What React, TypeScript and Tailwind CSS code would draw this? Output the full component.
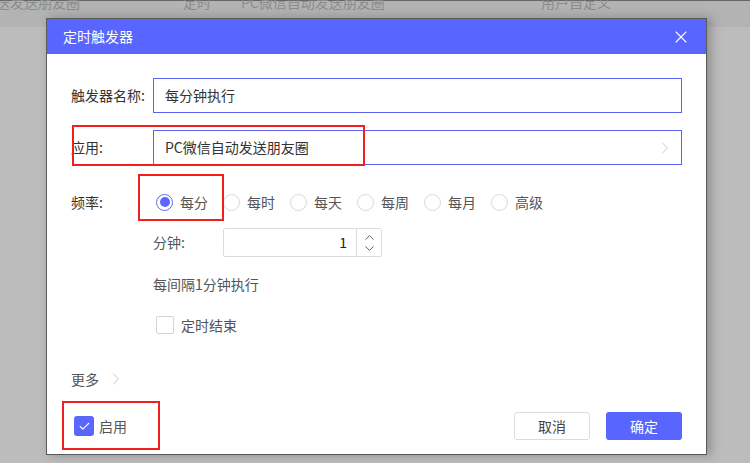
import { Check, ChevronRight, ChevronUp, ChevronDown, X } from "lucide-react";

const FREQS = ["每分", "每时", "每天", "每周", "每月", "高级"];

function Radio({ label, checked }: { label: string; checked?: boolean }) {
  return (
    <label className="flex items-center gap-[7px]">
      <span
        className={
          checked
            ? "flex h-[17px] w-[17px] items-center justify-center rounded-full border border-[#5a67fd] bg-white"
            : "h-[17px] w-[17px] rounded-full border border-[#d9d9d9] bg-white"
        }
      >
        {checked && <span className="h-[10px] w-[10px] rounded-full bg-[#5a67fd]" />}
      </span>
      <span className="text-[14px] text-[#555]">{label}</span>
    </label>
  );
}

export default function App() {
  return (
    <div className="relative h-[463px] w-[750px] overflow-hidden bg-[#bcbcbc] font-['Noto_Sans_CJK_SC',sans-serif]">
      {/* table behind the mask */}
      <div className="h-[27px] border-t border-[#666] bg-[#b3b3b3] text-[14px] leading-none text-[#8c8c8c]">
        <div className="relative -top-[6px] flex">
          <span className="-ml-[4px] w-[187px]">送发送朋友圈</span>
          <span className="w-[58px]">定时</span>
          <span className="w-[300px]">PC微信自动发送朋友圈</span>
          <span>用户自定义</span>
        </div>
      </div>

      {/* dialog */}
      <div className="absolute left-[46px] top-[18px] flex h-[437px] w-[661px] flex-col border border-[#5a5a5a] bg-white shadow-[4px_0_10px_rgba(0,0,0,0.25)]">
        <div className="flex h-[35px] items-center justify-between bg-[#5865fe] pl-[16px] pr-[15px] text-[14px] text-white">
          <span>定时触发器</span>
          <X size={20} strokeWidth={1.3} />
        </div>

        <div className="flex flex-1 flex-col px-[24px] text-[14px] text-[#333]">
          <div className="mt-[24px] flex h-[35px] items-center">
            <span className="w-[82px]">触发器名称:</span>
            <div className="flex h-full flex-1 items-center border border-[#5b63f3] pl-[11px]">每分钟执行</div>
          </div>

          <div className="mt-[17px] flex h-[35px] items-center">
            <span className="w-[82px]">应用:</span>
            <div className="flex h-full flex-1 items-center justify-between border border-[#5b63f3] pl-[11px] pr-[6px]">
              <span>PC微信自动发送朋友圈</span>
              <ChevronRight size={20} strokeWidth={1.2} className="text-[#c8c8c8]" />
            </div>
          </div>

          <div className="mt-[25px] flex h-[24px] items-center">
            <span className="w-[85px]">频率:</span>
            <div className="flex items-center gap-[15px]">
              {FREQS.map((f, i) => (
                <Radio key={f} label={f} checked={i === 0} />
              ))}
            </div>
          </div>

          <div className="ml-[82px] mt-[14px] flex h-[29px] items-center">
            <span className="w-[70px] text-[#555]">分钟:</span>
            <div className="flex h-full w-[159px] rounded-[2px] border border-[#dcdcdc]">
              <div className="flex flex-1 items-center justify-end pr-[9px] text-[#222]">1</div>
              <div className="flex w-[25px] flex-col items-center justify-center border-l border-[#dcdcdc] text-[#555]">
                <ChevronUp size={15} strokeWidth={1.5} className="-mb-[4px]" />
                <ChevronDown size={15} strokeWidth={1.5} />
              </div>
            </div>
          </div>

          <div className="ml-[82px] mt-[17px] flex h-[20px] items-center text-[#555]">每间隔1分钟执行</div>

          <div className="ml-[85px] mt-[21px] flex h-[20px] items-center gap-[7px] text-[#555]">
            <span className="h-[18px] w-[18px] rounded-[2px] border border-[#d4d4d4]" />
            <span>定时结束</span>
          </div>

          <div className="mt-[34px] flex h-[20px] items-center gap-[7px] text-[#555]">
            <span>更多</span>
            <ChevronRight size={20} strokeWidth={1.2} className="text-[#c8c8c8]" />
          </div>

          <div className="mt-[23px] flex h-[28px] items-center justify-between">
            <div className="flex items-center gap-[5px] pl-[3px] text-[#555]">
              <span className="flex h-[20px] w-[20px] items-center justify-center rounded-[3px] bg-[#5a67fd] text-white">
                <Check size={13} strokeWidth={2} />
              </span>
              <span>启用</span>
            </div>
            <div className="flex gap-[16px]">
              <button className="h-[28px] w-[76px] rounded-[3px] border border-[#dcdcdc] bg-white text-[#444]">取消</button>
              <button className="h-[28px] w-[76px] rounded-[3px] bg-[#5865fe] text-white">确定</button>
            </div>
          </div>
        </div>
      </div>

      {/* red annotation boxes */}
      <div className="absolute left-[72px] top-[125px] h-[41px] w-[293px] border-2 border-[#f41e1e]" />
      <div className="absolute left-[138px] top-[174px] h-[47px] w-[86px] border-2 border-[#f41e1e]" />
      <div className="absolute left-[62px] top-[401px] h-[49px] w-[98px] border-2 border-[#f41e1e]" />
    </div>
  );
}
